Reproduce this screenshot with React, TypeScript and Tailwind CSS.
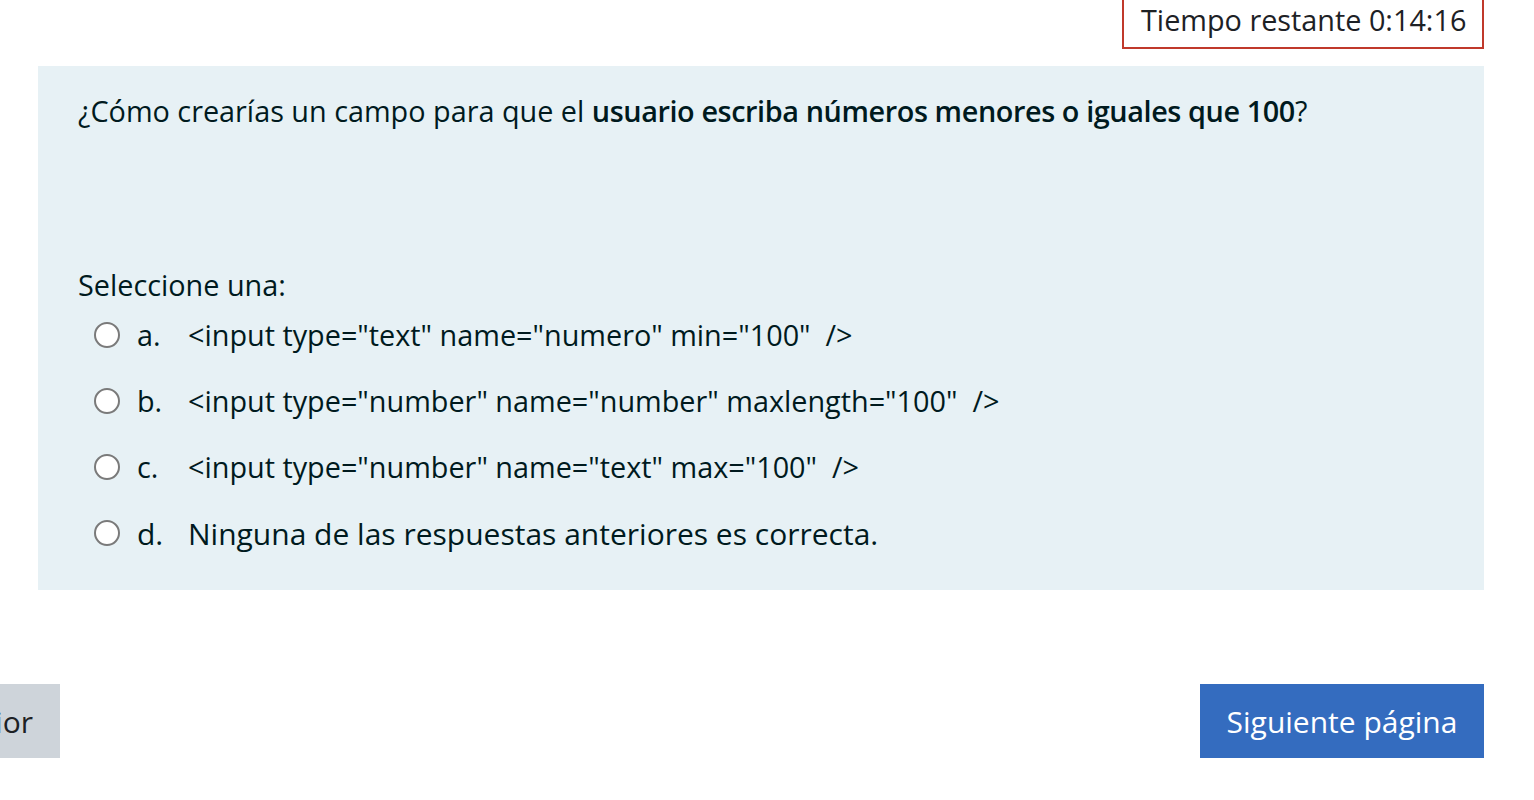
const options = [
  { letter: "a.", text: '<input type="text" name="numero" min="100"  />', size: "text-[28.8px]" },
  { letter: "b.", text: '<input type="number" name="number" maxlength="100"  />', size: "text-[28.8px]" },
  { letter: "c.", text: '<input type="number" name="text" max="100"  />', size: "text-[28.8px]" },
  { letter: "d.", text: "Ninguna de las respuestas anteriores es correcta.", size: "text-[30px]" },
];

export default function App() {
  return (
    <div className="h-[800px] w-full overflow-hidden bg-white font-['Open_Sans',sans-serif] text-[28.8px] text-[#1d2125]">
      <div className="flex justify-end pr-[50px]">
        <div className="h-[49px] w-[362px] border-x-2 border-b-2 border-[#c0392b] pl-[17px] pt-[6px] leading-none whitespace-pre">
          Tiempo restante 0:14:16
        </div>
      </div>

      <div className="ml-[38px] mr-[50px] mt-[17px] h-[524px] bg-[#e7f1f5] pl-[40px] text-[#001a1e]">
        <p className="pt-[25px] leading-[40px]">
          ¿Cómo crearías un campo para que el{" "}
          <strong className="font-semibold tracking-[-0.4px]">usuario escriba números menores o iguales que 100</strong>?
        </p>

        <p className="mt-[134px] leading-[40px]">Seleccione una:</p>

        <div className="-mt-[3px] flex flex-col">
          {options.map((o) => (
            <label key={o.letter} className="flex h-[66px] items-center pl-[16px]">
              <span className="h-[26px] w-[26px] shrink-0 rounded-full border-2 border-[#7a7a7a] bg-white" />
              <span className={`ml-[17px] w-[51px] shrink-0 ${o.size}`}>{o.letter}</span>
              <span className={`whitespace-pre ${o.size}`}>{o.text}</span>
            </label>
          ))}
        </div>
      </div>

      <div className="mt-[94px] flex h-[74px] pr-[50px] text-[30px]">
        <div className="flex w-[60px] items-center justify-end overflow-hidden bg-[#ced4da] pr-[27px]">
          <span className="whitespace-nowrap">Página anterior</span>
        </div>
        <div className="ml-auto flex w-[284px] items-center justify-center bg-[#346cbf] text-white">
          Siguiente página
        </div>
      </div>
    </div>
  );
}
